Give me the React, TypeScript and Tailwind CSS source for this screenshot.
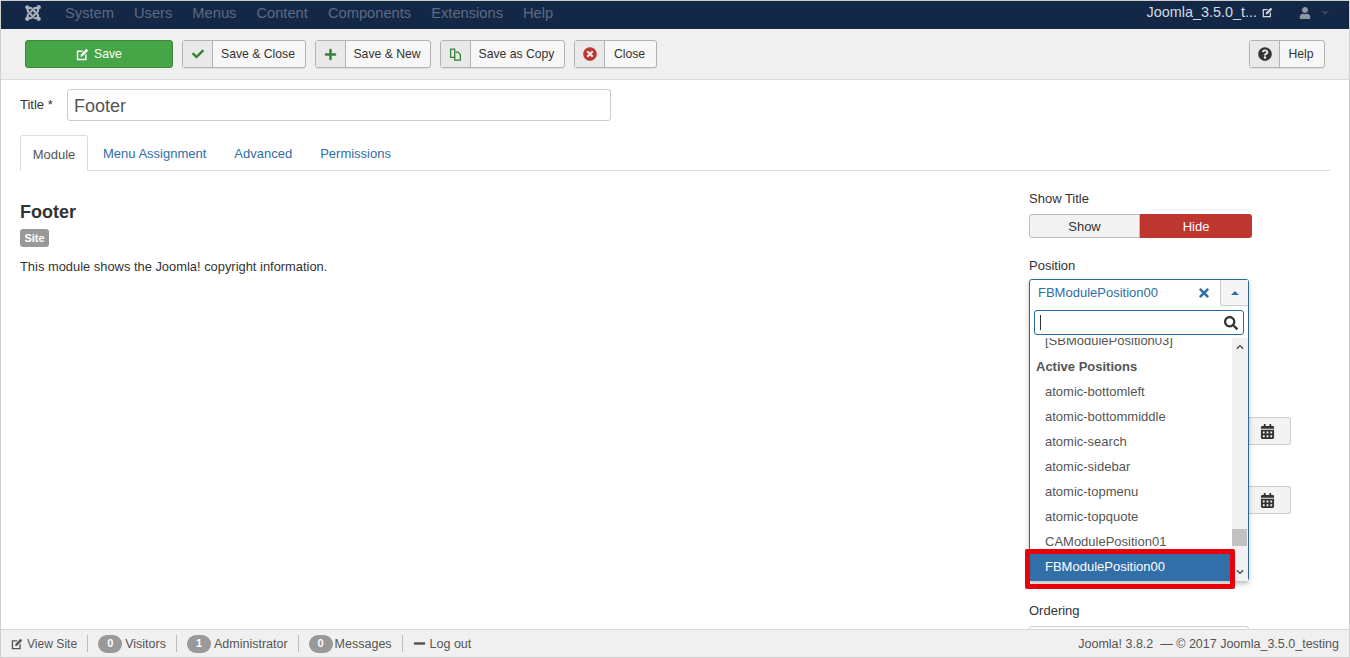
import React from 'react';
import {
  FaCalendarAlt,
  FaCheck,
  FaChevronDown,
  FaChevronUp,
  FaJoomla,
  FaMinus,
  FaPlus,
  FaQuestionCircle,
  FaSearch,
  FaTimes,
  FaTimesCircle,
  FaUser,
} from 'react-icons/fa';

const NAV_ITEMS = ['System', 'Users', 'Menus', 'Content', 'Components', 'Extensions', 'Help'];
const TABS = ['Menu Assignment', 'Advanced', 'Permissions'];
const POSITIONS = [
  'atomic-bottomleft',
  'atomic-bottommiddle',
  'atomic-search',
  'atomic-sidebar',
  'atomic-topmenu',
  'atomic-topquote',
  'CAModulePosition01',
];

const EditIcon: React.FC<{ className?: string }> = ({ className }) => (
  <svg viewBox="0 0 16 16" className={className} fill="currentColor">
    <path d="M1 3h8L7.4 4.8H2.8v8.4h8.4V9L13 7.2V15H1z" />
    <path d="M12.6 1 15 3.4 8.2 10.2 5.4 10.8 6 8z" />
  </svg>
);

const CopyIcon: React.FC<{ className?: string }> = ({ className }) => (
  <svg viewBox="0 0 16 16" className={className} fill="none" stroke="currentColor" strokeWidth="1.6">
    <path d="M2 1.5h5v10H2z" />
    <path d="M8 5h3l3 3v7H7v-3.5" />
  </svg>
);

const ToolButton: React.FC<{ icon: React.ReactNode; label: string; className: string }> = ({ icon, label, className }) => (
  <button className={`flex h-7 items-center rounded-[3px] border border-[#b3b3b3] bg-[#f7f7f7] text-[12.2px] text-[#333] shadow-[0_1px_1px_rgba(0,0,0,0.08)] ${className}`}>
    <span className="flex h-full w-[30px] shrink-0 items-center justify-center border-r border-[#b3b3b3] bg-[#e9e9e9]">{icon}</span>
    <span className="flex-1 pr-[2px] text-center">{label}</span>
  </button>
);

const Divider = () => <span className="mx-[10px] h-[17px] w-px bg-[#bdbdbd]" />;

const Count: React.FC<{ value: number }> = ({ value }) => (
  <span className="flex h-[18px] w-6 items-center justify-center rounded-full bg-[#999] text-[11px] font-bold text-white">{value}</span>
);

const CalendarRow: React.FC<{ className: string }> = ({ className }) => (
  <div className={`flex h-7 w-[262px] ${className}`}>
    <div className="flex-1 rounded-l-[3px] border border-[#ccc]" />
    <div className="flex w-[42px] items-center justify-center rounded-r-[3px] border border-l-0 border-[#ccc] bg-[#f3f3f3] pr-1 text-[#333]">
      <FaCalendarAlt className="h-[15px] w-[15px]" />
    </div>
  </div>
);

const PositionDropdown = () => (
  <div className="absolute left-0 top-[4px] z-10 h-[302px] w-[220px] rounded-[3px] border border-[#2a69a0] bg-white shadow-[0_3px_5px_rgba(0,0,0,0.25)]">
    <div className="flex h-[26px] items-center">
      <span className="flex-1 pl-2 text-[13px] text-[#2f6ea8]">FBModulePosition00</span>
      <FaTimes className="mr-[9px] h-[14px] w-[14px] text-[#2f6ea8]" />
      <div className="flex h-[26px] w-[28px] items-center justify-center rounded-bl-[3px] border-b border-l border-[#ccc] bg-[#f5f5f5]">
        <span className="h-0 w-0 border-x-[4px] border-b-[4px] border-x-transparent border-b-[#2f6ea8]" />
      </div>
    </div>
    <div className="mx-1 mt-1 flex h-[25px] items-center rounded-[3px] border border-[#2a69a0] pl-[5px] pr-[5px]">
      <span className="h-[15px] w-px bg-[#333]" />
      <FaSearch className="ml-auto h-[14px] w-[14px] text-[#333]" />
    </div>
    <div className="relative mt-[3px] h-[243px] overflow-hidden">
      <div className="-mt-[4px] pl-[15px] text-[13px] leading-[13px] text-[#555]">[SBModulePosition03]</div>
      <div className="mt-[11px] pl-[6px] text-[13px] font-bold leading-[18px] text-[#555]">Active Positions</div>
      <div className="mt-[3px]">
        {POSITIONS.map((name) => (
          <div key={name} className="flex h-[25px] items-center pl-[15px] text-[13px] text-[#555]">{name}</div>
        ))}
      </div>
      <div className="flex h-[27px] w-[202px] items-center bg-[#326ea8] pb-px pl-[15px] text-[13px] text-white">FBModulePosition00</div>
      <div className="h-[3px] w-[202px] bg-[#c8c8c8]" />
      <div className="absolute bottom-0 right-0 top-0 flex w-4 flex-col items-center justify-between bg-[#f1f1f1] py-[5px] text-[#444]">
        <FaChevronUp className="h-2 w-2" />
        <FaChevronDown className="h-2 w-2" />
        <div className="absolute left-0 top-[191px] h-[17px] w-[15px] bg-[#c1c1c1]" />
      </div>
    </div>
    <div className="absolute left-[-5px] top-[269px] h-[40px] w-[210px] rounded-[2px] border-[5px] border-[#e8000b]" />
  </div>
);

export default function App() {
  return (
    <div className="flex h-[658px] w-[1350px] flex-col overflow-hidden border-x border-y border-[#cfcfcf] bg-white font-['Liberation_Sans',Arial,sans-serif] text-[#333]">
      <nav className="flex h-[28px] shrink-0 items-center bg-[#132847] pb-[4px] text-[14.7px]">
        <FaJoomla className="ml-[23px] mr-[23px] h-[18px] w-[18px] text-[#a9b0ba]" />
        <div className="flex gap-[20px] text-[#5b6b82]">
          {NAV_ITEMS.map((item) => (
            <span key={item}>{item}</span>
          ))}
        </div>
        <div className="ml-auto flex items-center text-[14.4px] text-[#d5dae1]">
          <span>Joomla_3.5.0_t...</span>
          <EditIcon className="ml-[5px] h-[11px] w-[11px]" />
          <FaUser className="ml-[26px] h-[12px] w-[12px] text-[#8d96a3]" />
          <span className="ml-[10px] mr-[20px] h-0 w-0 border-x-[4px] border-t-[4px] border-x-transparent border-t-[#33445e]" />
        </div>
      </nav>

      <div className="flex h-[51px] shrink-0 items-start gap-[9px] border-b border-[#dcdcdc] bg-[#f0f0f0] pl-[24px] pr-[24px] pt-[11px]">
        <button className="flex h-7 w-[148px] items-center justify-center gap-[5px] rounded-[3px] border border-[#3a8a3a] bg-[#46a546] text-[12.2px] text-white">
          <EditIcon className="h-[13px] w-[13px]" />
          Save
        </button>
        <ToolButton className="w-[124px]" label="Save & Close" icon={<FaCheck className="h-3 w-3 text-[#378137]" />} />
        <ToolButton className="w-[116px]" label="Save & New" icon={<FaPlus className="h-[13px] w-[13px] text-[#378137]" />} />
        <ToolButton className="w-[125px]" label="Save as Copy" icon={<CopyIcon className="h-[13px] w-[13px] text-[#378137]" />} />
        <ToolButton className="w-[83px]" label="Close" icon={<FaTimesCircle className="h-[14px] w-[14px] text-[#bd362f]" />} />
        <ToolButton className="ml-auto w-[76px]" label="Help" icon={<FaQuestionCircle className="h-[14px] w-[14px] text-[#333]" />} />
      </div>

      <main className="flex min-h-0 flex-1 flex-col overflow-hidden pl-[19px] pr-[19px]">
        <div className="mt-[9px] flex items-start">
          <label className="mt-[6px] w-[47px] text-[13px]">Title *</label>
          <div className="flex h-8 w-[544px] items-center rounded-[3px] border border-[#ccc] pl-[6px] pt-[2px] text-[18px] text-[#555]">Footer</div>
        </div>

        <div className="mt-[14px] flex h-[36px] shrink-0 items-end border-b border-[#ddd] text-[13px] text-[#2f6ea8]">
          <span className="-mb-px flex h-[36px] w-[68px] items-center justify-center rounded-t-[3px] border border-b-white border-[#ddd] bg-white pt-[3px] text-[#555]">Module</span>
          <div className="flex h-[35px] items-center gap-[28px] pl-[15px] pt-[3px]">
            {TABS.map((tab) => (
              <span key={tab}>{tab}</span>
            ))}
          </div>
        </div>

        <div className="flex min-h-0 flex-1">
          <section className="w-[1009px] shrink-0 pt-[31px]">
            <h2 className="text-[18px] font-bold leading-[20px]">Footer</h2>
            <span className="mt-[7px] flex h-[18px] w-[29px] items-center justify-center rounded-[3px] bg-[#999] text-[11px] font-bold text-white">Site</span>
            <p className="mt-[11px] text-[12.9px] leading-[18px]">This module shows the Joomla! copyright information.</p>
          </section>

          <aside className="w-[300px] pt-[19px] text-[13px]">
            <div className="leading-[18px]">Show Title</div>
            <div className="mt-[6px] flex h-[24px] w-[223px]">
              <span className="flex w-[111px] items-center justify-center rounded-l-[3px] border border-[#bbb] bg-[#f3f3f3] pt-px">Show</span>
              <span className="flex flex-1 items-center justify-center rounded-r-[3px] bg-[#bd362f] pt-px text-white">Hide</span>
            </div>
            <div className="mt-[19px] leading-[18px]">Position</div>
            <div className="relative">
              <PositionDropdown />
              <div className="pt-[142px]">
                <CalendarRow className="" />
                <CalendarRow className="mt-[41px]" />
              </div>
              <div className="mt-[88px] leading-[18px]">Ordering</div>
              <div className="mt-[6px] h-[28px] w-[220px] rounded-[3px] border border-[#ccc]" />
            </div>
          </aside>
        </div>
      </main>

      <footer className="flex h-[28px] shrink-0 items-center border-t border-[#d8d8d8] bg-[#f0f0f0] pl-[10px] pr-[10px] text-[12.5px] text-[#555]">
        <EditIcon className="mr-[4px] h-3 w-3" />
        <span className="pt-px text-[12.1px]">View Site</span>
        <Divider />
        <Count value={0} />
        <span className="ml-[3px] pt-px">Visitors</span>
        <Divider />
        <Count value={1} />
        <span className="ml-[3px] pt-px">Administrator</span>
        <Divider />
        <Count value={0} />
        <span className="ml-[2px] pt-px">Messages</span>
        <Divider />
        <FaMinus className="mr-[4px] h-[13px] w-[13px]" />
        <span className="pt-px">Log out</span>
        <span className="ml-auto pt-px">Joomla! 3.8.2 &nbsp;— © 2017 Joomla_3.5.0_testing</span>
      </footer>
    </div>
  );
}
